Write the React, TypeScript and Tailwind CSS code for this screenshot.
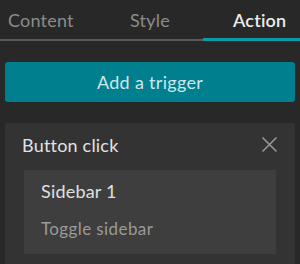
import React from 'react';

const TABS = [
  { label: 'Content', width: 'w-[100px]', pad: 'pl-2', active: false },
  { label: 'Style', width: 'w-[103px]', pad: 'pl-[30px]', active: false },
  { label: 'Action', width: 'w-[97px]', pad: 'pl-[30px]', active: true },
];

const App: React.FC = () => {
  return (
    <div className="w-[300px] h-[264px] overflow-hidden bg-[#282828] font-['Lato',sans-serif]">
      <div className="flex h-[41px]">
        {TABS.map((tab) => (
          <div
            key={tab.label}
            className={`${tab.width} ${tab.pad} flex items-center text-[18px] tracking-[0.2px] ${
              tab.active
                ? 'border-b-[3px] border-[#0a9aab] text-[#ececec] font-semibold pt-[2px]'
                : 'border-b-[2px] border-[#5a5a5a] text-[#8c8c8c] pt-[1px]'
            }`}
          >
            {tab.label}
          </div>
        ))}
      </div>

      <div className="px-[5px] pt-[21px]">
        <button className="w-full h-[40px] rounded-[3px] bg-[#007f8f] text-[18px] tracking-[0.3px] text-[#cfe6e9] flex items-center justify-center">
          Add a trigger
        </button>

        <div className="mt-[21px] bg-[#333333] rounded-t-[2px] pt-[8px] pb-[10px]">
          <div className="flex items-center justify-between pl-[17px] pr-[17px] h-[28px]">
            <span className="text-[18px] tracking-[0.2px] text-[#e2e2e2]">Button click</span>
            <svg width="17" height="17" viewBox="0 0 17 17" fill="none" stroke="#9a9a9a" strokeWidth="1.5" className="-mt-[2px]">
              <path d="M1.5 1.5 L15.5 15.5 M15.5 1.5 L1.5 15.5" />
            </svg>
          </div>
          <div className="mx-[19px] mt-[11px] bg-[#3e3e3e] h-[84px] pl-[17px] pt-[7px]">
            <div className="text-[18px] tracking-[0.2px] text-[#e0e0e0] leading-[28px]">Sidebar 1</div>
            <div className="text-[17px] tracking-[0.4px] text-[#9a9a9a] mt-[11px]">Toggle sidebar</div>
          </div>
        </div>
      </div>
    </div>
  );
};

export default App;
